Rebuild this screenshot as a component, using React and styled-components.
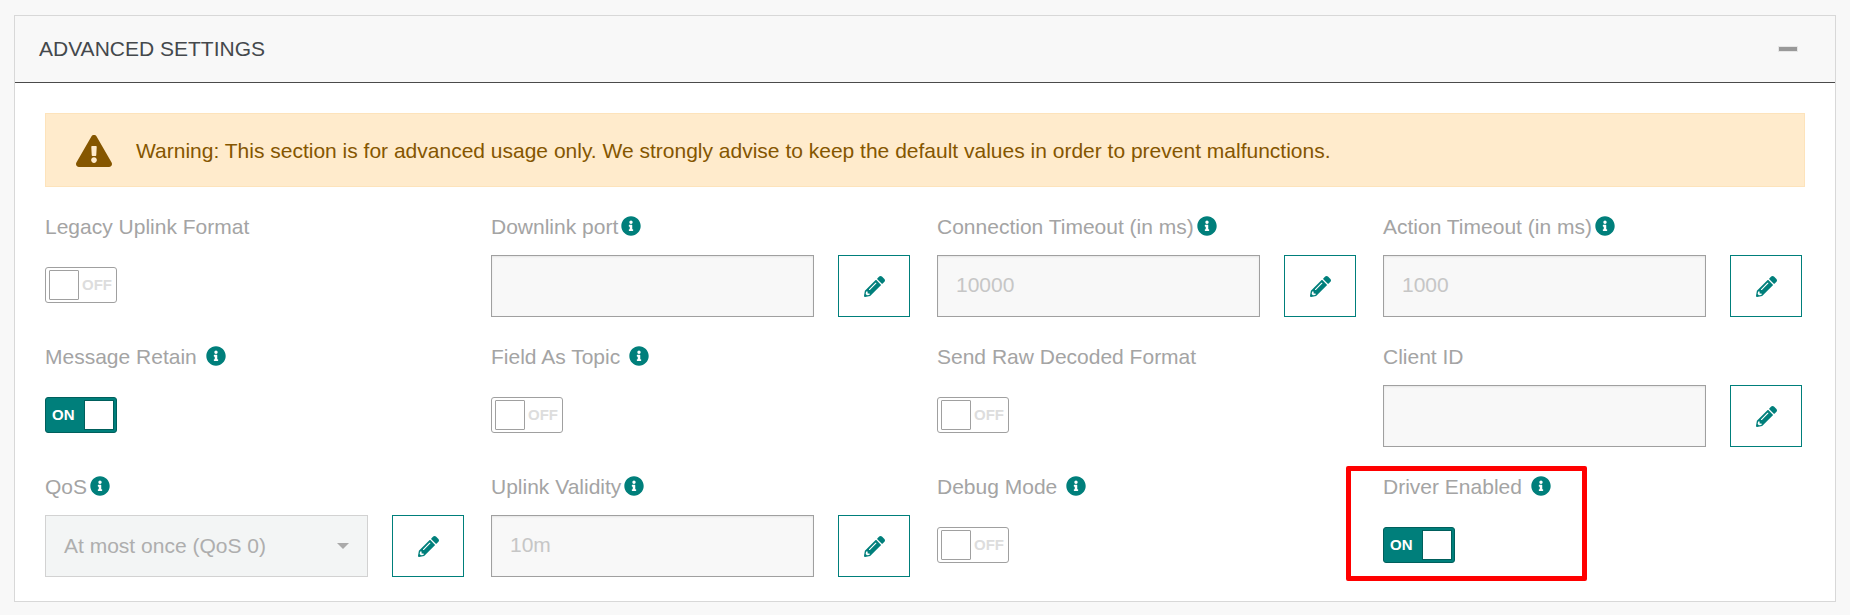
import React from "react";
import styled, { createGlobalStyle } from "styled-components";
import { FaInfoCircle, FaPencilAlt, FaExclamationTriangle } from "react-icons/fa";

const TEAL = "#007f7b";

const Global = createGlobalStyle`
  html, body { margin: 0; padding: 0; background: #f8f8f8; overflow: hidden; }
  body { font-family: "Liberation Sans", Arial, sans-serif; }
`;

const Page = styled.div`
  padding: 15px 14px 13px;
  height: 615px;
  box-sizing: border-box;
`;

const Panel = styled.section`
  position: relative;
  background: #fff;
  border: 1.5px solid #d8d8d8;
  box-sizing: border-box;
  height: 587px;
  width: 1821.5px;
`;

const Header = styled.header`
  display: flex;
  align-items: center;
  justify-content: space-between;
  height: 66px;
  padding: 0 38px 0 24px;
  background: #f8f8f8;
  border-bottom: 1.5px solid #4a4a4a;
  color: #44484c;
  font-size: 21px;
`;

const Collapse = styled.span`
  display: block;
  width: 18px;
  height: 4px;
  background: #999;
  box-shadow: 0 0 0 1px #e6e6e6;
`;

const Body = styled.div`
  padding: 30px 30px 24px 30px;
`;

const Warning = styled.div`
  display: flex;
  align-items: center;
  gap: 24px;
  height: 74px;
  padding: 0 30px;
  box-sizing: border-box;
  background: #ffebcc;
  border: 1px solid #fde3bb;
  color: #855600;
  font-size: 21px;
  svg { font-size: 36px; flex: none; color: #855600; margin-top: 2px; }
  span { padding-top: 2px; }
`;

const Grid = styled.div`
  display: grid;
  grid-template-columns: repeat(4, 422px);
  column-gap: 24px;
  row-gap: 26px;
  margin-top: 26px;
`;

const Cell = styled.div`
  display: flex;
  flex-direction: column;
  height: 104px;
`;

const Label = styled.div`
  display: flex;
  align-items: center;
  height: 26px;
  margin-bottom: 16px;
  color: #a4a4a4;
  font-size: 21px;
  gap: ${(p) => (p.$spaced ? "9px" : "3px")};
  span { padding-top: 2px; }
  svg { color: ${TEAL}; font-size: 20px; flex: none; }
`;

const Control = styled.div`
  display: grid;
  grid-template-columns: 323px 72px;
  column-gap: 24px;
  height: 62px;
`;

const TextInput = styled.input`
  width: 100%;
  height: 100%;
  box-sizing: border-box;
  padding: 0 18px 2px 18px;
  background: #f8f8f8;
  border: 1.5px solid #a0a0a0;
  box-shadow: inset 0 1px 2px rgba(0, 0, 0, 0.08);
  color: #c6c6c6;
  font: 21px "Liberation Sans", Arial, sans-serif;
  outline: none;
`;

const Select = styled.div`
  display: flex;
  align-items: center;
  justify-content: space-between;
  box-sizing: border-box;
  padding: 0 18px;
  background: #f3f5f5;
  border: 1.5px solid #d2d2d2;
  color: #aeaeae;
  font-size: 21px;
`;

const Caret = styled.span`
  width: 0;
  height: 0;
  border-left: 6px solid transparent;
  border-right: 6px solid transparent;
  border-top: 6px solid #aaa;
`;

const EditButton = styled.button`
  display: flex;
  align-items: center;
  justify-content: center;
  padding: 0;
  background: #fff;
  border: 1.5px solid ${TEAL};
  color: ${TEAL};
  font-size: 21px;
`;

const Switch = styled.div`
  display: flex;
  align-items: center;
  justify-content: space-between;
  flex-direction: ${(p) => (p.$on ? "row" : "row-reverse")};
  width: 72px;
  height: 36px;
  margin-top: 12px;
  box-sizing: border-box;
  padding: ${(p) => (p.$on ? "0 2.5px 0 6px" : "0 4px 0 2.5px")};
  border: 1.5px solid ${(p) => (p.$on ? "#005f5c" : "#a0a0a0")};
  border-radius: 3px;
  background: ${(p) => (p.$on ? TEAL : "#fff")};
  color: ${(p) => (p.$on ? "#fff" : "#ddd")};
  font-size: 15px;
  font-weight: 700;
  span:first-child { padding-bottom: 2px; }
`;

const Thumb = styled.span`
  display: block;
  width: 30px;
  height: 30px;
  box-sizing: border-box;
  background: #fff;
  border: 1.5px solid ${(p) => (p.$on ? "#005f5c" : "#a0a0a0")};
  border-radius: ${(p) => (p.$on ? "0" : "1px")};
`;

const Highlight = styled.div`
  position: absolute;
  left: 1330.5px;
  top: 449.5px;
  width: 241px;
  height: 115px;
  box-sizing: border-box;
  border: 5px solid #ff0000;
  border-radius: 2px;
  pointer-events: none;
`;

const fields = [
  { label: "Legacy Uplink Format", kind: "switch", on: false, noInfo: true },
  { label: "Downlink port", kind: "input", value: "" },
  { label: "Connection Timeout (in ms)", kind: "input", value: "10000" },
  { label: "Action Timeout (in ms)", kind: "input", value: "1000" },
  { label: "Message Retain", kind: "switch", on: true, spaced: true },
  { label: "Field As Topic", kind: "switch", on: false, spaced: true },
  { label: "Send Raw Decoded Format", kind: "switch", on: false, noInfo: true },
  { label: "Client ID", kind: "input", value: "", noInfo: true },
  { label: "QoS", kind: "select", value: "At most once (QoS 0)" },
  { label: "Uplink Validity", kind: "input", value: "10m" },
  { label: "Debug Mode", kind: "switch", on: false, spaced: true },
  { label: "Driver Enabled", kind: "switch", on: true, spaced: true },
];

function Toggle({ on }) {
  return (
    <Switch $on={on}>
      <span>{on ? "ON" : "OFF"}</span>
      <Thumb $on={on} />
    </Switch>
  );
}

function Field({ field }) {
  return (
    <Cell>
      <Label $spaced={field.spaced}>
        <span>{field.label}</span>
        {!field.noInfo && <FaInfoCircle />}
      </Label>
      {field.kind === "switch" ? (
        <div>
          <Toggle on={field.on} />
        </div>
      ) : (
        <Control>
          {field.kind === "select" ? (
            <Select>
              <span>{field.value}</span>
              <Caret />
            </Select>
          ) : (
            <TextInput disabled value={field.value} readOnly />
          )}
          <EditButton aria-label="Edit">
            <FaPencilAlt />
          </EditButton>
        </Control>
      )}
    </Cell>
  );
}

export default function App() {
  return (
    <Page>
      <Global />
      <Panel>
        <Header>
          <span>ADVANCED SETTINGS</span>
          <Collapse />
        </Header>
        <Body>
          <Warning>
            <FaExclamationTriangle />
            <span>
              Warning: This section is for advanced usage only. We strongly advise to keep the default values in order to prevent malfunctions.
            </span>
          </Warning>
          <Grid>
            {fields.map((f) => (
              <Field key={f.label} field={f} />
            ))}
          </Grid>
        </Body>
        <Highlight />
      </Panel>
    </Page>
  );
}
